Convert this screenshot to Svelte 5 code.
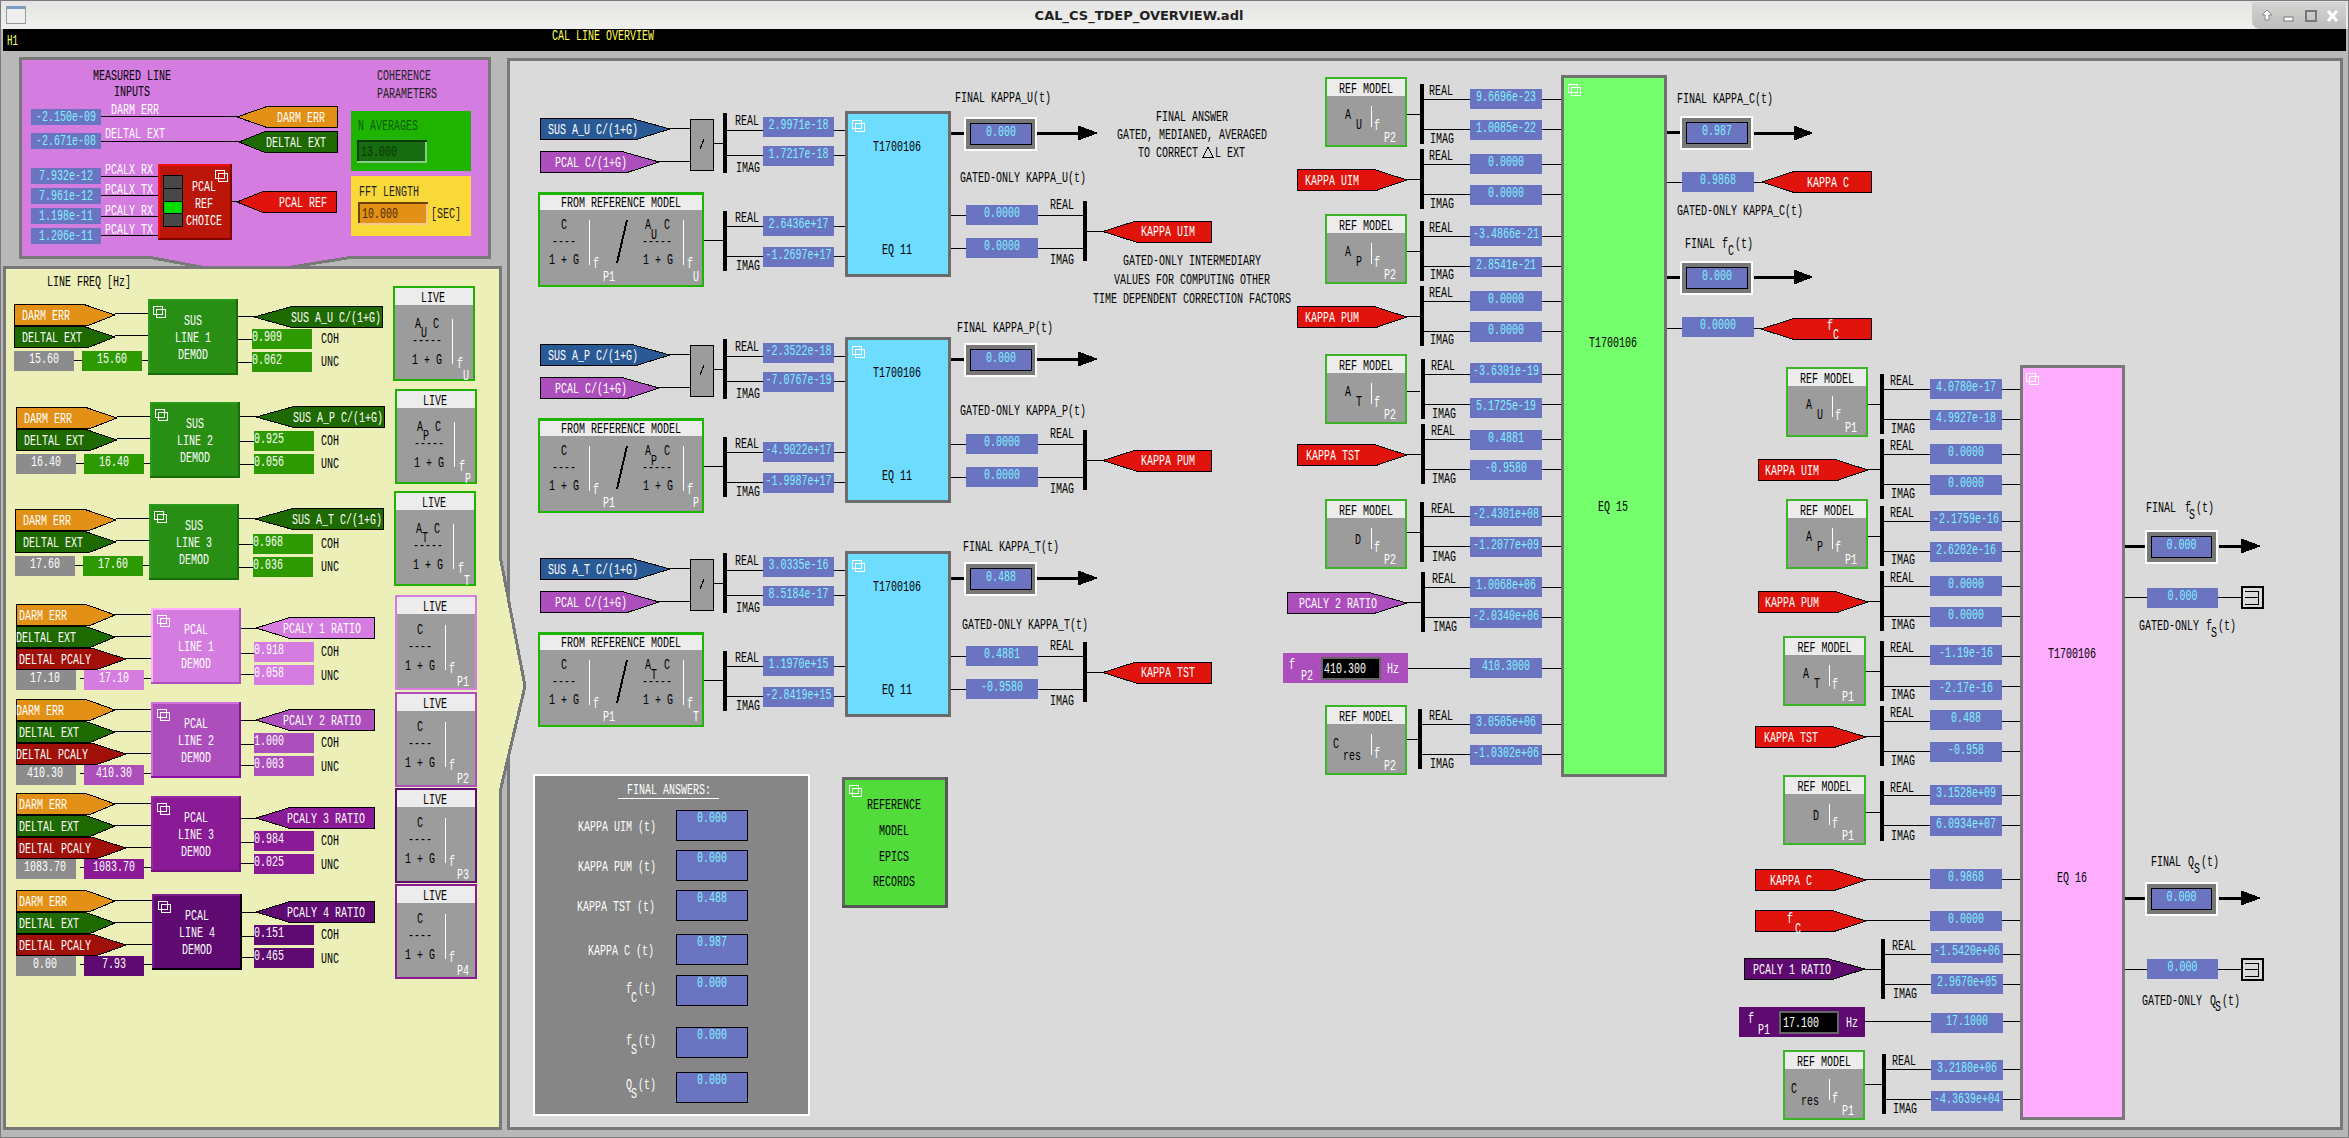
<script>
  // display list, same idea as the .adl file: every widget sits at screen coordinates
  const BLUE = '#6b74c0', CY = '#7ff2ff', PANEL = '#787878', GREY = '#9c9c9c', HEAD = '#ececec'
  const RED = '#e0140c', ORANGE = '#e29016', DGREEN = '#1e6a00', DRED = '#a01008', NAVY = '#2a5a96'
  const P1 = '#d47ce0', P2 = '#ac4fbc', P3 = '#8a1a96', P4 = '#5e0a70', LGREEN = '#2c9a00'
  const items = []

  const r = (x, y, x2, y2, fill, stroke = 'none', sw = 1) => items.push({ k: 'r', x, y, w: x2 - x, h: y2 - y, fill, stroke, sw })
  const poly = (pts, fill, stroke = '#000', sw = 1) => items.push({ k: 'p', pts: pts.map((p) => p.join(',')).join(' '), fill, stroke, sw })
  // 15px Liberation Mono squeezed to the 6px cell of the X font
  const t = (x, y, s, fill = '#000', a = 'start') => items.push({ k: 't', tf: `translate(${x} ${y + 5}) scale(.6667 1)`, s, fill, a })
  const c = (x, y, s, fill = '#000') => t(x, y, s, fill, 'middle')
  const w = (x1, x2, y, h = 1) => r(x1, y, x2, y + h, '#000')
  const vl = (x, y1, y2, fill = '#fff') => r(x, y1, x + 1, y2, fill)

  const val = (x, y, x2, y2, s, fill = BLUE, col = CY) => {
    r(x, y, x2, y2, fill)
    c((x + x2) / 2, y + 7, s, col)
  }
  const rtag = (x, y, top, bot, tip, fill, s, tx, col = '#fff') => {
    poly([[x, y], [top, y], [tip, y + 10.5], [bot, y + 21], [x, y + 21]], fill)
    if (s) t(tx, y + 10, s, col)
  }
  const ltag = (tip, body, x2, y, fill, s, tx, col = '#fff') => {
    poly([[tip, y + 10.5], [body, y], [x2, y], [x2, y + 21], [body, y + 21]], fill)
    if (s) t(tx, y + 10, s, col)
  }
  const icon = (x, y) => {
    r(x + 0.5, y + 0.5, x + 9.5, y + 8.5, 'none', '#fff')
    r(x + 3.5, y + 3.5, x + 12.5, y + 11.5, 'none', '#fff')
  }
  const bevel = (x, y, x2, y2, fill, lite, dark, n = 3) => {
    r(x, y, x2, y2, fill)
    r(x, y, x2, y + n, lite)
    r(x, y, x + n, y2, lite)
    r(x, y2 - n, x2, y2, dark)
    r(x2 - n, y, x2, y2, dark)
  }
  const bus = (bx, top, lx, lr, l1, l2, li, vx, v1, v2, s1, s2, bar, vw = 72) => {
    r(bx, top, bx + 4, top + 60, '#000')
    t(lx, lr, 'REAL')
    t(lx + 1, li, 'IMAG')
    w(bx + 4, vx, l1)
    w(bx + 4, vx, l2)
    w(vx + vw, bar, l1)
    w(vx + vw, bar, l2)
    val(vx, v1, vx + vw, v1 + 20, s1)
    val(vx, v2, vx + vw, v2 + 20, s2)
  }
  const finalBox = (x, y, s, inX = 6, inW = 62) => {
    r(x, y, x + 73, y + 34, '#fff')
    r(x + 2, y + 2, x + 71, y + 32, PANEL)
    r(x + inX + 0.5, y + 6.5, x + inX + inW - 0.5, y + 27.5, BLUE, '#000')
    c(x + inX + inW / 2, y + 14, s, CY)
  }
  const arrow = (x1, x2, tip, y) => {
    w(x1, x2, y - 1, 3)
    poly([[x2, y - 7], [tip, y], [x2, y + 7]], '#000')
  }

  // main panel goes first, the line freq panel's point lies over its left edge
  r(508.5, 59.5, 2341.5, 1128.5, '#dadada', PANEL, 3)

  // ---- measured line inputs ----
  poly([[20.5, 58.5], [489, 58.5], [489, 257], [353, 257], [243, 275], [148, 257], [20.5, 257]], P1, PANEL, 3)
  c(132, 75, 'MEASURED LINE')
  c(132, 91, 'INPUTS')
  t(377, 75, 'COHERENCE', '#222')
  t(377, 93, 'PARAMETERS', '#222')
  w(101, 240, 116)
  w(101, 240, 141)
  for (const y of [176, 195, 216, 235]) w(101, 158, y)
  val(31, 109, 101, 125, '-2.150e-09')
  val(31, 133, 101, 149, '-2.671e-08')
  val(31, 168, 101, 184, '7.932e-12')
  val(31, 188, 101, 204, '7.961e-12')
  val(31, 208, 101, 224, '1.198e-11')
  val(31, 228, 101, 244, '1.206e-11')
  t(111, 109, 'DARM ERR', '#fff')
  t(105, 133, 'DELTAL EXT', '#fff')
  t(105, 169, 'PCALX RX', '#fff')
  t(105, 189, 'PCALX TX', '#fff')
  t(105, 210, 'PCALY RX', '#fff')
  t(105, 229, 'PCALY TX', '#fff')
  ltag(237, 267, 337.5, 106.5, ORANGE, 'DARM ERR', 277)
  ltag(239, 265, 337.5, 131.5, DGREEN, 'DELTAL EXT', 266)
  w(232, 238, 201)
  ltag(237, 263, 336.5, 191.5, RED, 'PCAL REF', 279)
  bevel(158, 164, 232, 240, '#bc160a', '#f01010', '#7c0804', 2)
  for (let i = 0; i < 4; i++) {
    r(163.5, 175.5 + i * 12.75, 182.5, 188.25 + i * 12.75, i === 2 ? '#00dc00' : '#484848', '#000')
  }
  icon(215, 170)
  c(204, 186, 'PCAL', '#fff')
  c(204, 203, 'REF', '#fff')
  c(204, 220, 'CHOICE', '#fff')
  r(351, 111, 471, 171, '#1eb400')
  t(358, 125, 'N AVERAGES', '#0d5c0a')
  r(357, 140, 427, 163, '#176b10')
  r(357, 140, 427, 142, '#0a3a06')
  r(357, 140, 359, 163, '#0a3a06')
  r(357, 161, 427, 163, '#8cc888')
  r(425, 142, 427, 163, '#8cc888')
  t(361, 151, '13.000', '#0a3a06')
  r(351, 176, 471, 236, '#f9d83a')
  t(359, 191, 'FFT LENGTH', '#222')
  r(358, 202, 428, 225, ORANGE)
  r(358, 202, 428, 204, '#6a4208')
  r(358, 202, 360, 225, '#6a4208')
  r(358, 223, 428, 225, '#f4c88a')
  r(426, 204, 428, 225, '#f4c88a')
  t(362, 213, '10.000', '#4a2c00')
  t(431, 213, '[SEC]', '#222')

  // ---- line freq panel ----
  poly([[4.5, 267.5], [500.5, 267.5], [500.5, 558], [525, 686], [500.5, 790], [500.5, 1128.5], [4.5, 1128.5]], '#ecf0b8', PANEL, 3)
  t(47, 281, 'LINE FREQ [Hz]')

  const live = (x, y, border, sub, p) => {
    r(x, y, x + 82, y + 95, border)
    r(x + 2, y + 2, x + 80, y + 19, HEAD)
    r(x + 2, y + 19, x + 80, y + 93, GREY)
    c(x + 40, y + 11, 'LIVE')
    if (p) {
      c(x + 25, y + 34, 'C')
      c(x + 25, y + 51, '----')
      c(x + 25, y + 70, '1 + G')
      vl(x + 50, y + 30, y + 75)
      c(x + 57, y + 73, 'f', '#fff')
      c(x + 68, y + 86, p, '#fff')
    } else {
      c(x + 25, y + 37, 'A')
      c(x + 43, y + 37, 'C')
      c(x + 31, y + 46, sub)
      c(x + 34, y + 54, '-----')
      c(x + 34, y + 73, '1 + G')
      vl(x + 59, y + 33, y + 78)
      c(x + 67, y + 77, 'f', '#fff')
      c(x + 73, y + 89, sub, '#fff')
    }
  }

  const sus = (dx, dy, oy, cy, n, sub, g, coh, unc) => {
    rtag(14.5 + dx, 304.5 + dy, 84 + dx, 88 + dx, 115 + dx, ORANGE, 'DARM ERR', 22 + dx)
    rtag(14.5 + dx, 326.5 + dy, 84 + dx, 88 + dx, 115 + dx, DGREEN, 'DELTAL EXT', 22 + dx)
    w(115 + dx, 148 + dx, 313 + dy)
    w(115 + dx, 148 + dx, 335 + dy)
    r(14 + dx, 351 + dy, 74 + dx, 371 + dy, '#8c8c8c')
    c(44 + dx, 358 + dy, g, '#fff')
    w(74 + dx, 82 + dx, 360 + dy)
    val(82 + dx, 351 + dy, 142 + dx, 371 + dy, g, LGREEN, '#fff')
    w(142 + dx, 148 + dx, 360 + dy)
    bevel(148 + dx, 299 + dy, 238 + dx, 375 + dy, '#288e14', '#2c9a1a', '#186c0c', 2)
    icon(153 + dx, 306 + dy)
    c(193 + dx, 320 + dy, 'SUS', '#fff')
    c(193 + dx, 337 + dy, 'LINE ' + n, '#fff')
    c(193 + dx, 354 + dy, 'DEMOD', '#fff')
    w(238 + dx, 254 + dx, 316 + oy)
    ltag(254 + dx, 292 + dx, 382.5 + dx, 306.5 + oy, DGREEN, `SUS A_${sub} C/(1+G)`, 291 + dx)
    w(238 + dx, 252 + dx, 339 + cy)
    w(238 + dx, 252 + dx, 362 + cy)
    r(252 + dx, 329 + cy, 312 + dx, 349 + cy, LGREEN)
    r(252 + dx, 352 + cy, 312 + dx, 372 + cy, LGREEN)
    t(252 + dx, 336 + cy, coh, '#fff')
    t(252 + dx, 359 + cy, unc, '#fff')
    t(321, 338 + cy, 'COH')
    t(321, 361 + cy, 'UNC')
    live(393 + dx, 286 + dy, '#20b000', sub)
  }
  sus(0, 0, 0, 0, 1, 'U', '15.60', '0.909', '0.062')
  sus(2, 103, 100, 102, 2, 'P', '16.40', '0.925', '0.056')
  sus(1, 205, 202, 205, 3, 'T', '17.60', '0.968', '0.036')

  const pcal = (o) => {
    const { s, b, bx, out, cy, ly, fill, lite, dark, border, n, p, tx, otx, g, f, coh, unc } = o
    rtag(16.5, 604.5 + s, 86, 90, 115, ORANGE, 'DARM ERR', tx[0])
    rtag(16.5, 626.5 + s, 86, 90, 115, DGREEN, 'DELTAL EXT', tx[1])
    rtag(16.5, 648.5 + s, 93, 97, 126, DRED, 'DELTAL PCALY', tx[2])
    w(115, 151 + bx, 614 + s)
    w(115, 151 + bx, 636 + s)
    w(126, 151 + bx, 658 + s)
    r(16, 670 + s, 76, 690 + s, '#8c8c8c')
    c(45, 677 + s, g, '#fff')
    w(80, 84, 678 + s)
    val(84, 670 + s, 144, 690 + s, f, fill, '#fff')
    w(144, 151 + bx, 678 + s)
    bevel(151 + bx, 608 + b, 241 + bx, 684 + b, fill, lite, dark, 2)
    icon(157 + bx, 615 + b)
    c(196 + bx, 629 + b, 'PCAL', '#fff')
    c(196 + bx, 646 + b, 'LINE ' + n, '#fff')
    c(196 + bx, 663 + b, 'DEMOD', '#fff')
    w(241 + bx, 256, 628 + out)
    ltag(256, 290, 374.5, 617.5 + out, fill, `PCALY ${n} RATIO`, otx)
    w(241 + bx, 254, 653 + cy)
    w(241 + bx, 254, 674 + cy)
    r(254, 642 + cy, 314, 662 + cy, fill)
    r(254, 665 + cy, 314, 685 + cy, fill)
    t(254, 649 + cy, coh, '#fff')
    t(254, 672 + cy, unc, '#fff')
    t(321, 651 + cy, 'COH')
    t(321, 675 + cy, 'UNC')
    live(395, 595 + ly, border, '', p)
  }
  pcal({ s: 0, b: 0, bx: 0, out: 0, cy: 0, ly: 0, fill: P1, lite: '#ffb0ff', dark: '#b050c0', border: P1, n: 1, p: 'P1', tx: [19, 16, 19], otx: 283, g: '17.10', f: '17.10', coh: '0.918', unc: '0.058' })
  pcal({ s: 95, b: 94, bx: 0, out: 92, cy: 91, ly: 97, fill: P2, lite: '#d070dc', dark: '#8a10a0', border: P2, n: 2, p: 'P2', tx: [16, 19, 16], otx: 283, g: '410.30', f: '410.30', coh: '1.000', unc: '0.003' })
  pcal({ s: 189, b: 188, bx: 0, out: 190, cy: 189, ly: 193, fill: P3, lite: '#9c2aa8', dark: '#72107e', border: P4, n: 3, p: 'P3', tx: [19, 19, 19], otx: 287, g: '1083.70', f: '1083.70', coh: '0.984', unc: '0.025' })
  pcal({ s: 286, b: 286, bx: 1, out: 284, cy: 283, ly: 289, fill: P4, lite: '#7a1a8c', dark: '#000', border: P3, n: 4, p: 'P4', tx: [19, 19, 19], otx: 287, g: '0.00', f: '7.93', coh: '0.151', unc: '0.465' })

  const kappaRow = (o) => {
    const { d, fd, fy, fx, gd, gy, gx, sub, v, out, tag, fin } = o
    rtag(540.5, 118.5 + d, 632, 636, 670, NAVY, `SUS A_${sub} C/(1+G)`, 548)
    rtag(540.5, 151.5 + d, 622, 627, 659, P2, 'PCAL C/(1+G)', 555)
    w(670, 690, 128 + d)
    w(659, 690, 161 + d)
    r(690.5, 119.5 + d, 713.5, 170.5 + d, GREY, '#000')
    w(713, 723, 143 + d)
    poly([[704, 139 + d], [700, 149 + d]], 'none', '#000')
    bus(723, 113 + d, 735, 120 + d, 130 + d, 155 + d, 167 + d, 763, 117 + d, 146 + d, v[0], v[1], 845, 71)
    // reference model box
    r(538, 192 + d, 704, 287 + d, '#1eb400')
    r(540, 195 + d, 702, 210 + d, HEAD)
    r(540, 210 + d, 702, 285 + d, GREY)
    c(621, 202 + d, 'FROM REFERENCE MODEL')
    c(564, 224 + d, 'C')
    c(564, 241 + d, '----')
    c(564, 259 + d, '1 + G')
    vl(589, 220 + d, 265 + d)
    c(596, 263 + d, 'f', '#fff')
    c(609, 276 + d, 'P1', '#fff')
    poly([[627, 220 + d], [617, 263 + d]], 'none', '#000', 2)
    c(648, 224 + d, 'A')
    c(667, 224 + d, 'C')
    c(654, 234 + d, sub)
    c(657, 241 + d, '-----')
    c(658, 259 + d, '1 + G')
    vl(683, 220 + d, 265 + d)
    c(690, 263 + d, 'f', '#fff')
    c(696, 276 + d, sub, '#fff')
    w(704, 723, 240 + d)
    bus(723, 211 + d, 735, 217 + d, 226 + d, 256 + d, 265 + d, 763, 216 + d, 247 + d, v[2], v[3], 845, 71)
    // T1700106 box
    r(846.5, 112.5 + d, 949.5, 275.5 + d, '#6edcff', '#6c6c6c', 3)
    icon(852, 120 + d)
    c(897, 146 + d, 'T1700106')
    c(897, 249 + d, 'EQ 11')
    t(fx, fy, `FINAL KAPPA_${sub}(t)`)
    w(951, 964, 132 + fd, 3)
    finalBox(964, 117 + fd, fin)
    arrow(1037, 1078, 1097, 133 + fd)
    t(gx, gy, `GATED-ONLY KAPPA_${sub}(t)`)
    w(951, 966, 215 + gd)
    w(951, 966, 248 + gd)
    w(1038, 1083, 215 + gd)
    w(1038, 1083, 248 + gd)
    val(966, 205 + gd, 1038, 225 + gd, out[0])
    val(966, 238 + gd, 1038, 258 + gd, out[1])
    r(1083, 201 + gd, 1087, 261 + gd, '#000')
    t(1050, 204 + gd, 'REAL')
    t(1050, 259 + gd, 'IMAG')
    w(1087, 1103, 231 + gd)
    ltag(1103, 1136, 1211.5, 221 + gd, RED, tag, 1141)
  }
  kappaRow({ d: 0, fd: 0, fy: 97, fx: 955, gd: 0, gy: 177, gx: 960, sub: 'U', v: ['2.9971e-18', '1.7217e-18', '2.6436e+17', '-1.2697e+17'], out: ['0.0000', '0.0000'], tag: 'KAPPA UIM', fin: '0.000' })
  kappaRow({ d: 226, fd: 226, fy: 327, fx: 957, gd: 229, gy: 410, gx: 960, sub: 'P', v: ['-2.3522e-18', '-7.0767e-19', '-4.9022e+17', '-1.9987e+17'], out: ['0.0000', '0.0000'], tag: 'KAPPA PUM', fin: '0.000' })
  kappaRow({ d: 440, fd: 445, fy: 546, fx: 963, gd: 441, gy: 624, gx: 962, sub: 'T', v: ['3.0335e-16', '8.5184e-17', '1.1970e+15', '-2.8419e+15'], out: ['0.4881', '-0.9580'], tag: 'KAPPA TST', fin: '0.488' })

  c(1192, 116, 'FINAL ANSWER')
  c(1192, 134, 'GATED, MEDIANED, AVERAGED')
  t(1138, 152, 'TO CORRECT')
  poly([[1203, 157], [1208, 147], [1213, 157]], 'none', '#000')
  t(1215, 152, 'L EXT')
  c(1192, 260, 'GATED-ONLY INTERMEDIARY')
  c(1192, 279, 'VALUES FOR COMPUTING OTHER')
  c(1192, 298, 'TIME DEPENDENT CORRECTION FACTORS')

  // final answers card
  r(534, 775, 809, 1115, '#868686', '#fff', 2)
  c(669, 789, 'FINAL ANSWERS:', '#fff')
  r(618, 798, 719, 799, '#fff')
  const ans = [[810, '0.000'], [850, '0.000'], [890, '0.488'], [934, '0.987'], [975, '0.000'], [1027, '0.000'], [1072, '0.000']]
  for (const [y, s] of ans) {
    r(676.5, y + 0.5, 747.5, y + 30.5, BLUE, '#000')
    c(712, y + 7, s, CY)
  }
  t(578, 826, 'KAPPA UIM (t)', '#fff')
  t(578, 866, 'KAPPA PUM (t)', '#fff')
  t(577, 906, 'KAPPA TST (t)', '#fff')
  t(588, 950, 'KAPPA C (t)', '#fff')
  const sym = (x, y, a, b, col = '#fff') => {
    t(x, y, a, col)
    t(x + 5, y + 9, b, col)
    t(x + 12, y, '(t)', col)
  }
  sym(626, 988, 'f', 'C')
  sym(626, 1040, 'f', 'S')
  sym(626, 1084, 'Q', 'S')

  // epics records button
  bevel(842, 777, 948, 908, '#52dc3c', '#666', '#555', 3)
  icon(849, 785)
  c(894, 804, 'REFERENCE')
  c(894, 830, 'MODEL')
  c(894, 856, 'EPICS')
  c(894, 881, 'RECORDS')

  const refModel = (x, y, x2, o) => {
    r(x, y, x2, y + 70, '#3cb428')
    r(x + 2, y + 2, x2 - 2, y + 19, HEAD)
    r(x + 2, y + 19, x2 - 2, y + 68, GREY)
    c((x + x2) / 2, y + 11, 'REF MODEL')
    if (o.res) {
      c(x + 11, y + 38, o.a)
      c(x + 27, y + 50, 'res')
    } else if (o.b) {
      c(x + 23, y + 37, o.a)
      c(x + 34, y + 47, o.b)
    } else {
      c(x + 33, y + 40, o.a)
    }
    vl(x + 46, y + 29, y + 50)
    c(x + 52, y + 48, 'f', '#fff')
    c(x + 65, y + 60, o.p, '#fff')
  }

  // ---- eq 15 ----
  refModel(1325, 77, 1407, { a: 'A', b: 'U', p: 'P2' })
  w(1407, 1420, 114)
  bus(1420, 84, 1429, 90, 99, 129, 138, 1470, 89, 120, '9.6696e-23', '1.0085e-22', 1561)
  rtag(1297.5, 169.5, 1374, 1376, 1407, RED, 'KAPPA UIM', 1305)
  w(1407, 1420, 179)
  bus(1420, 149, 1429, 155, 164, 194, 203, 1470, 154, 185, '0.0000', '0.0000', 1561)
  refModel(1325, 214, 1407, { a: 'A', b: 'P', p: 'P2' })
  w(1407, 1420, 251)
  bus(1420, 221, 1429, 227, 236, 266, 274, 1470, 226, 257, '-3.4866e-21', '2.8541e-21', 1561)
  rtag(1297.5, 306.5, 1374, 1376, 1407, RED, 'KAPPA PUM', 1305)
  w(1407, 1420, 316)
  bus(1420, 286, 1429, 292, 301, 331, 339, 1470, 291, 322, '0.0000', '0.0000', 1561)
  refModel(1325, 354, 1407, { a: 'A', b: 'T', p: 'P2' })
  w(1407, 1420, 391)
  bus(1421, 359, 1431, 365, 374, 404, 413, 1470, 363, 398, '-3.6301e-19', '5.1725e-19', 1561)
  rtag(1297.5, 444.5, 1374, 1376, 1407, RED, 'KAPPA TST', 1306)
  w(1407, 1421, 454)
  bus(1421, 424, 1431, 430, 439, 469, 478, 1470, 430, 460, '0.4881', '-0.9580', 1561)
  refModel(1325, 499, 1407, { a: 'D', p: 'P2' })
  w(1407, 1420, 532)
  bus(1420, 502, 1431, 508, 516, 546, 556, 1470, 506, 537, '-2.4301e+08', '-1.2077e+09', 1561)
  rtag(1287.5, 592.5, 1369, 1374, 1407, P2, 'PCALY 2 RATIO', 1299)
  w(1407, 1421, 602)
  bus(1421, 572, 1432, 578, 587, 617, 626, 1470, 577, 608, '1.0068e+06', '-2.0340e+06', 1561)
  r(1283, 653, 1408, 683, P2)
  t(1289, 664, 'f', '#fff')
  t(1301, 675, 'P2', '#fff')
  r(1321, 657, 1381, 680, '#666')
  r(1323, 659, 1379, 678, '#000')
  t(1324, 668, '410.300', '#fff')
  t(1387, 668, 'Hz', '#fff')
  w(1408, 1470, 668)
  w(1542, 1561, 668)
  val(1470, 658, 1542, 678, '410.3000')
  refModel(1325, 705, 1407, { a: 'C', res: true, p: 'P2' })
  w(1407, 1418, 739)
  bus(1418, 709, 1429, 715, 724, 754, 763, 1470, 714, 745, '3.0505e+06', '-1.0302e+06', 1561)
  r(1562.5, 76.5, 1665.5, 775.5, '#74ff6c', '#707070', 3)
  icon(1568, 84)
  c(1613, 342, 'T1700106')
  c(1613, 506, 'EQ 15')

  t(1677, 98, 'FINAL KAPPA_C(t)')
  w(1667, 1680, 131, 3)
  finalBox(1680, 116, '0.987')
  arrow(1754, 1794, 1812, 133)
  w(1667, 1682, 182)
  w(1754, 1762, 182)
  val(1682, 172, 1754, 192, '0.9868')
  ltag(1762, 1794, 1871.5, 171.5, RED, 'KAPPA C', 1807)
  t(1677, 210, 'GATED-ONLY KAPPA_C(t)')
  t(1685, 243, 'FINAL')
  t(1722, 243, 'f')
  t(1728, 250, 'C')
  t(1735, 243, '(t)')
  w(1667, 1680, 276, 3)
  finalBox(1680, 261, '0.000')
  arrow(1754, 1794, 1812, 277)
  w(1667, 1682, 328)
  w(1754, 1762, 328)
  val(1682, 317, 1754, 337, '0.0000')
  ltag(1761, 1794, 1871.5, 318.5, RED, '', 0)
  t(1827, 325, 'f', '#fff')
  t(1833, 334, 'C', '#fff')

  // ---- eq 16 ----
  refModel(1786, 367, 1868, { a: 'A', b: 'U', p: 'P1' })
  w(1868, 1880, 404)
  bus(1880, 374, 1890, 380, 389, 419, 428, 1930, 379, 410, '4.0780e-17', '4.9927e-18', 2020)
  rtag(1758.5, 459.5, 1835, 1837, 1868, RED, 'KAPPA UIM', 1765)
  w(1868, 1880, 469)
  bus(1880, 439, 1890, 445, 454, 484, 493, 1930, 444, 475, '0.0000', '0.0000', 2020)
  refModel(1786, 499, 1868, { a: 'A', b: 'P', p: 'P1' })
  w(1868, 1880, 536)
  bus(1880, 506, 1890, 512, 521, 551, 559, 1930, 511, 542, '-2.1759e-16', '2.6202e-16', 2020)
  rtag(1758.5, 591.5, 1835, 1837, 1868, RED, 'KAPPA PUM', 1765)
  w(1868, 1880, 601)
  bus(1880, 571, 1890, 577, 586, 616, 624, 1930, 576, 607, '0.0000', '0.0000', 2020)
  refModel(1783, 636, 1866, { a: 'A', b: 'T', p: 'P1' })
  w(1866, 1880, 671)
  bus(1880, 641, 1890, 647, 656, 686, 694, 1930, 645, 680, '-1.19e-16', '-2.17e-16', 2020)
  rtag(1755.5, 726.5, 1832, 1834, 1866, RED, 'KAPPA TST', 1764)
  w(1866, 1880, 736)
  bus(1880, 706, 1890, 712, 721, 751, 760, 1930, 710, 742, '0.488', '-0.958', 2020)
  refModel(1783, 775, 1866, { a: 'D', p: 'P1' })
  w(1866, 1880, 812)
  bus(1880, 781, 1890, 787, 795, 825, 835, 1930, 785, 816, '3.1528e+09', '6.0934e+07', 2020)
  rtag(1755.5, 869.5, 1832, 1834, 1866, RED, 'KAPPA C', 1770)
  w(1866, 1930, 879)
  w(2002, 2020, 879)
  val(1930, 869, 2002, 889, '0.9868')
  rtag(1755.5, 910.5, 1832, 1834, 1866, RED, '', 0)
  t(1787, 918, 'f', '#fff')
  t(1795, 928, 'C', '#fff')
  w(1866, 1930, 920)
  w(2002, 2020, 920)
  val(1930, 911, 2002, 931, '0.0000')
  rtag(1744.5, 958.5, 1827, 1832, 1865, P4, 'PCALY 1 RATIO', 1753)
  w(1865, 1881, 969)
  bus(1881, 939, 1892, 945, 954, 984, 993, 1931, 943, 974, '-1.5420e+06', '2.9670e+05', 2020)
  r(1739, 1007, 1865, 1037, P4)
  t(1748, 1018, 'f', '#fff')
  t(1758, 1029, 'P1', '#fff')
  r(1779, 1011, 1839, 1034, '#666')
  r(1781, 1013, 1837, 1032, '#000')
  t(1783, 1022, '17.100', '#fff')
  t(1846, 1022, 'Hz', '#fff')
  w(1865, 1931, 1021)
  w(2003, 2020, 1021)
  val(1931, 1013, 2003, 1033, '17.1000')
  refModel(1783, 1050, 1865, { a: 'C', res: true, p: 'P1' })
  w(1865, 1882, 1084)
  bus(1882, 1054, 1892, 1060, 1069, 1099, 1108, 1931, 1060, 1091, '3.2180e+06', '-4.3639e+04', 2020)
  r(2021.5, 366.5, 2123.5, 1118.5, '#ffaeff', '#787878', 3)
  icon(2026, 373)
  c(2072, 653, 'T1700106')
  c(2072, 877, 'EQ 16')

  const terminator = (x, y) => {
    r(x + 1, y + 1, x + 22, y + 22, 'none', '#000', 2)
    w(x + 4, x + 17, y + 5)
    w(x + 4, x + 17, y + 11)
    w(x + 4, x + 17, y + 18)
    r(x + 17, y + 5, x + 18, y + 19, '#000')
  }
  t(2146, 507, 'FINAL')
  t(2185, 507, 'f')
  t(2189, 514, 'S')
  t(2196, 507, '(t)')
  w(2125, 2145, 545, 3)
  finalBox(2145, 530, '0.000', 6, 61)
  arrow(2219, 2241, 2260, 546)
  w(2125, 2147, 597)
  w(2218, 2241, 597)
  val(2147, 588, 2218, 608, '0.000')
  terminator(2241, 586)
  t(2139, 625, 'GATED-ONLY')
  t(2206, 625, 'f')
  t(2211, 632, 'S')
  t(2218, 625, '(t)')

  t(2151, 861, 'FINAL')
  t(2188, 861, 'Q')
  t(2194, 868, 'S')
  t(2201, 861, '(t)')
  w(2125, 2145, 897, 3)
  finalBox(2145, 882, '0.000', 6, 61)
  arrow(2219, 2241, 2260, 898)
  w(2125, 2147, 969)
  w(2218, 2241, 969)
  val(2147, 959, 2218, 979, '0.000')
  terminator(2241, 958)
  t(2142, 1000, 'GATED-ONLY')
  t(2210, 1000, 'Q')
  t(2215, 1006, 'S')
  t(2222, 1000, '(t)')
</script>

<div class="window">
  <header class="titlebar">
    <span class="menu-btn"></span>
    <h1>CAL_CS_TDEP_OVERVIEW.adl</h1>
    <div class="controls">
      <svg width="94" height="26" viewBox="0 0 94 26">
        <path d="M15 8 L20 13 H17 V18 H13 V13 H10 Z" fill="#fff" stroke="#888" />
        <rect x="32" y="15" width="9" height="4" fill="#fff" stroke="#777" />
        <rect x="54" y="9" width="10" height="10" fill="none" stroke="#777" stroke-width="2" />
        <path d="M76 9 L85 19 M85 9 L76 19" stroke="#fff" stroke-width="3" />
      </svg>
    </div>
  </header>
  <div class="headbar">
    <svg width="2343" height="22" viewBox="0 0 2343 22">
      <text transform="translate(4 16) scale(.61 1)" fill="#ffff66">H1</text>
      <text transform="translate(549 11) scale(.6667 1)" fill="#ffff55">CAL LINE OVERVIEW</text>
    </svg>
  </div>
  <svg class="stage" width="2349" height="1087" viewBox="0 51 2349 1087">
    {#each items as i}
      {#if i.k === 'r'}
        <rect x={i.x} y={i.y} width={i.w} height={i.h} fill={i.fill} stroke={i.stroke} stroke-width={i.sw} />
      {:else if i.k === 'p'}
        <polygon points={i.pts} fill={i.fill} stroke={i.stroke} stroke-width={i.sw} />
      {:else}
        <text transform={i.tf} fill={i.fill} text-anchor={i.a}>{i.s}</text>
      {/if}
    {/each}
  </svg>
</div>

<style>
  :global(body) {
    margin: 0;
    background: #b8b8b8;
  }

  .window {
    width: 2349px;
    height: 1138px;
    display: flex;
    flex-direction: column;
    overflow: hidden;
    position: relative;
  }

  .window::after {
    content: "";
    position: absolute;
    inset: 0;
    border: 1px solid #7a7a7a;
    border-top: none;
    pointer-events: none;
  }

  .titlebar {
    height: 29px;
    flex: none;
    display: flex;
    align-items: center;
    background: linear-gradient(#e4e4e2, #f0f0ee);
    border-top: 1px solid #7a7a7a;
    box-sizing: border-box;
  }

  .menu-btn {
    width: 20px;
    height: 18px;
    margin-left: 6px;
    flex: none;
    border: 1px solid #999;
    border-top: 3px solid #7f9ac4;
    background: #eeeeec;
    box-sizing: border-box;
  }

  h1 {
    flex: 1;
    margin: 0;
    text-align: center;
    font: bold 13px "DejaVu Sans", sans-serif;
    color: #222;
  }

  .controls {
    width: 94px;
    height: 27px;
    margin-right: 3px;
    flex: none;
    background: linear-gradient(#d4d4d2, #bcbcba);
    border-bottom-left-radius: 8px;
  }

  .headbar {
    height: 22px;
    flex: none;
    margin: 0 3px;
    background: #000;
  }

  .headbar svg,
  .controls svg,
  .stage {
    display: block;
  }

  svg text {
    font: 15px "Liberation Mono", monospace;
  }

  .stage :global(rect),
  .stage :global(polygon) {
    shape-rendering: crispEdges;
  }
</style>
